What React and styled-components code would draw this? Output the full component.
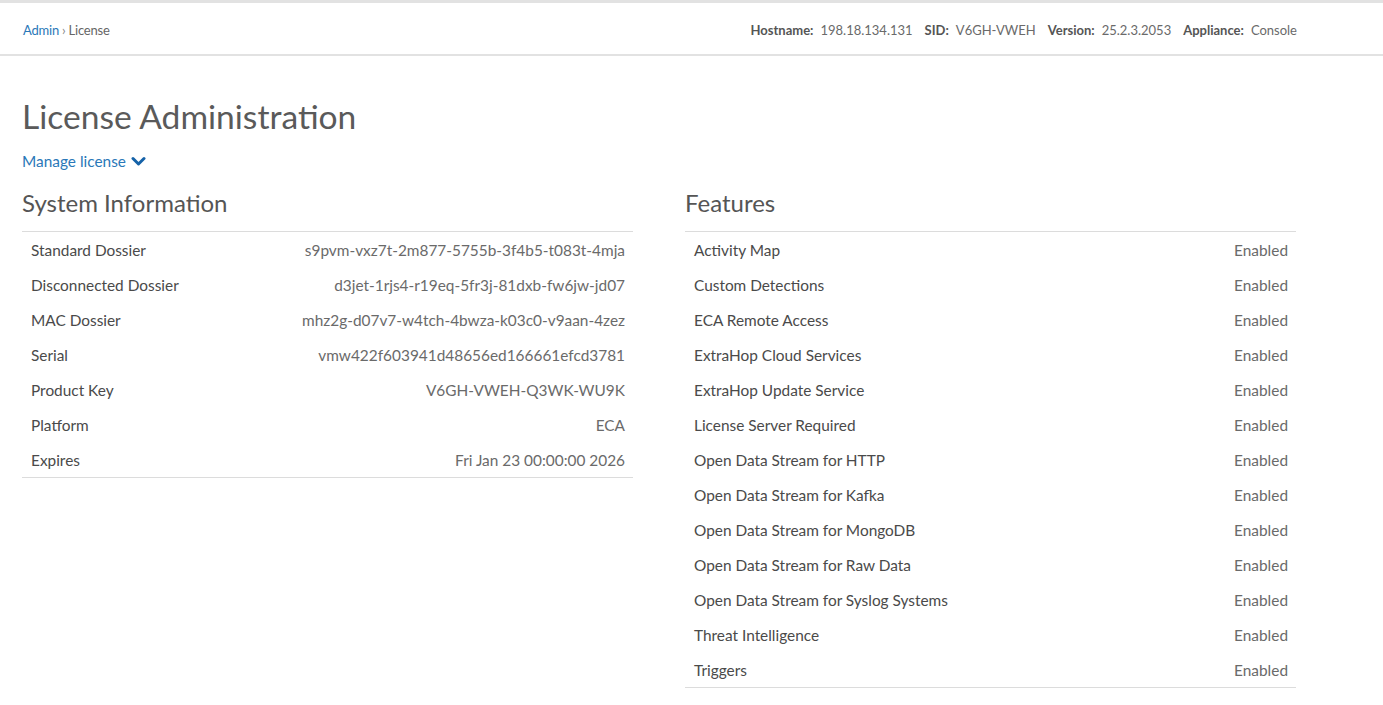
import React from "react";
import styled, { createGlobalStyle } from "styled-components";

const GlobalStyle = createGlobalStyle`
  html, body {
    margin: 0;
    padding: 0;
    background: #fff;
    font-family: Lato, "Open Sans", sans-serif;
    color: #555;
  }
`;

const systemInfo = [
  ["Standard Dossier", "s9pvm-vxz7t-2m877-5755b-3f4b5-t083t-4mja"],
  ["Disconnected Dossier", "d3jet-1rjs4-r19eq-5fr3j-81dxb-fw6jw-jd07"],
  ["MAC Dossier", "mhz2g-d07v7-w4tch-4bwza-k03c0-v9aan-4zez"],
  ["Serial", "vmw422f603941d48656ed166661efcd3781"],
  ["Product Key", "V6GH-VWEH-Q3WK-WU9K"],
  ["Platform", "ECA"],
  ["Expires", "Fri Jan 23 00:00:00 2026"],
];

const features = [
  "Activity Map",
  "Custom Detections",
  "ECA Remote Access",
  "ExtraHop Cloud Services",
  "ExtraHop Update Service",
  "License Server Required",
  "Open Data Stream for HTTP",
  "Open Data Stream for Kafka",
  "Open Data Stream for MongoDB",
  "Open Data Stream for Raw Data",
  "Open Data Stream for Syslog Systems",
  "Threat Intelligence",
  "Triggers",
];

const meta = [
  ["Hostname:", "198.18.134.131"],
  ["SID:", "V6GH-VWEH"],
  ["Version:", "25.2.3.2053"],
  ["Appliance:", "Console"],
];

const App = () => {
  return (
    <>
      <GlobalStyle />
      <Header>
        <HeaderInner>
          <Breadcrumb>
            <a href="#admin">Admin</a>
            <span className="sep">›</span>
            <span>License</span>
          </Breadcrumb>
          <Meta>
            {meta.map(([label, value]) => (
              <MetaItem key={label}>
                <b>{label}</b>
                {value}
              </MetaItem>
            ))}
          </Meta>
        </HeaderInner>
      </Header>
      <Page>
        <Title>License Administration</Title>
        <Manage href="#manage">
          Manage license
          <svg width="15" height="11" viewBox="0 0 15 11" aria-hidden="true">
            <path
              d="M2 2.5 L7.5 8 L13 2.5"
              fill="none"
              stroke="currentColor"
              strokeWidth="3"
              strokeLinecap="round"
              strokeLinejoin="round"
            />
          </svg>
        </Manage>
        <Columns>
          <Section>
            <SectionTitle>System Information</SectionTitle>
            <Table>
              {systemInfo.map(([label, value]) => (
                <Row key={label}>
                  <Label>{label}</Label>
                  <Value>{value}</Value>
                </Row>
              ))}
            </Table>
          </Section>
          <Section>
            <SectionTitle>Features</SectionTitle>
            <Table>
              {features.map((name) => (
                <Row key={name}>
                  <Label>{name}</Label>
                  <Value>Enabled</Value>
                </Row>
              ))}
            </Table>
          </Section>
        </Columns>
      </Page>
    </>
  );
};

const Header = styled.header`
  border-top: 3px solid #e2e2e2;
  border-bottom: 2px solid #e2e2e2;
  height: 51px;
  display: flex;
  align-items: center;
`;

const HeaderInner = styled.div`
  width: 1274px;
  margin-left: 23px;
  display: flex;
  justify-content: space-between;
  align-items: center;
  font-size: 13px;
  padding-top: 2px;
`;

const Breadcrumb = styled.div`
  color: #666;
  letter-spacing: -0.2px;
  a {
    color: #2a78b8;
    text-decoration: none;
  }
  .sep {
    margin: 0 3px;
    color: #888;
  }
`;

const Meta = styled.div`
  display: flex;
  gap: 12px;
  color: #6a6a6a;
`;

const MetaItem = styled.span`
  b {
    color: #555;
    font-weight: 700;
    margin-right: 7px;
  }
`;

const Page = styled.main`
  width: 1274px;
  margin-left: 22px;
  padding-top: 40px;
`;

const Title = styled.h1`
  margin: 0;
  font-size: 33.6px;
  font-weight: 400;
  color: #5a5a5a;
  line-height: 40px;
`;

const Manage = styled.a`
  display: inline-flex;
  align-items: center;
  gap: 5px;
  margin-top: 16px;
  font-size: 15.4px;
  color: #2a78b8;
  text-decoration: none;
  svg {
    color: #1562a8;
    margin-top: 1px;
  }
`;

const Columns = styled.div`
  display: grid;
  grid-template-columns: 1fr 1fr;
  column-gap: 52px;
  margin-top: 19px;
`;

const Section = styled.section``;

const SectionTitle = styled.h2`
  margin: 0;
  font-size: 24px;
  font-weight: 400;
  color: #555;
  line-height: 28px;
  padding-bottom: 14px;
  border-bottom: 1px solid #dcdcdc;
`;

const Table = styled.div`
  border-bottom: 1px solid #dcdcdc;
`;

const Row = styled.div`
  display: flex;
  justify-content: space-between;
  align-items: center;
  height: 35px;
  padding: 0 8px 0 9px;
  font-size: 15.4px;
`;

const Label = styled.span`
  color: #4a4a4a;
`;

const Value = styled.span`
  color: #6a6a6a;
`;

export default App;
